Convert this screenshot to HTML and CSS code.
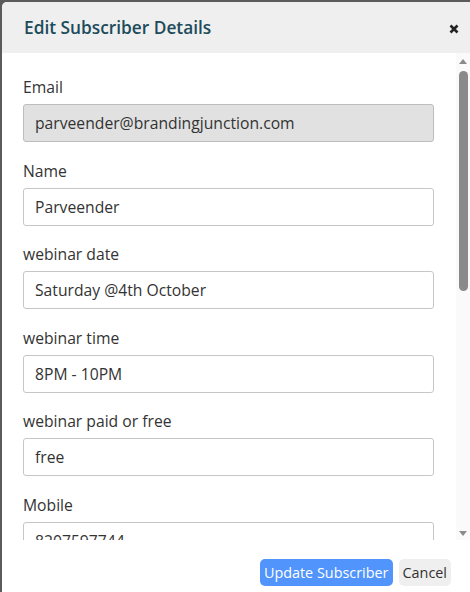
FILE: index.html
```html
<!DOCTYPE html>
<html>
<head>
<meta charset="utf-8">
<link rel="stylesheet" href="styles.css">
</head>
<body>
<div class="modal">
  <div class="modal-header">
    <h2 class="modal-title">Edit Subscriber Details</h2>
    <svg class="close" width="10" height="10" viewBox="0 0 10 10"><path d="M1.5 1.5 L8.5 8.5 M8.5 1.5 L1.5 8.5" stroke="#222" stroke-width="2.6" stroke-linecap="butt"/></svg>
  </div>
  <div class="modal-body">
    <div class="fields">
      <div class="field">
        <div class="label">Email</div>
        <div class="input disabled">parveender@brandingjunction.com</div>
      </div>
      <div class="field">
        <div class="label">Name</div>
        <div class="input">Parveender</div>
      </div>
      <div class="field">
        <div class="label">webinar date</div>
        <div class="input">Saturday @4th October</div>
      </div>
      <div class="field">
        <div class="label">webinar time</div>
        <div class="input">8PM - 10PM</div>
      </div>
      <div class="field">
        <div class="label">webinar paid or free</div>
        <div class="input">free</div>
      </div>
      <div class="field">
        <div class="label">Mobile</div>
        <div class="input">8207597744</div>
      </div>
    </div>
    <div class="scrollbar">
      <div class="arrow up"></div>
      <div class="track"><div class="thumb"></div></div>
      <div class="arrow down"></div>
    </div>
  </div>
  <div class="modal-footer">
    <button class="btn primary">Update Subscriber</button>
    <button class="btn secondary">Cancel</button>
  </div>
</div>
</body>
</html>
```
FILE: styles.css
```css
html, body {
  margin: 0;
  padding: 0;
  height: 100%;
  overflow: hidden;
}
body {
  background: #5b5b5b;
  font-family: "Open Sans", "Noto Sans", sans-serif;
  color: #333;
}
.modal {
  margin: 2px 0 0 2px;
  height: 590px;
  background: #fff;
  border-top-left-radius: 5px;
  display: flex;
  flex-direction: column;
  overflow: hidden;
}
.modal-header {
  height: 51px;
  flex: none;
  background: #efefef;
  display: flex;
  align-items: center;
  justify-content: space-between;
  padding: 0 11px 0 22px;
}
.modal-title {
  margin: 0;
  font-size: 17.3px;
  font-weight: 600;
  color: #1c4b5b;
  letter-spacing: 0;
}
.close {
  margin-top: 2px;
}
.modal-body {
  height: 487px;
  flex: none;
  display: flex;
  overflow: hidden;
}
.fields {
  flex: 1;
  padding: 24px 22px 0 21px;
  overflow: hidden;
}
.field {
  margin-bottom: 18.6px;
}
.label {
  font-size: 15.7px;
  line-height: 20px;
  margin-bottom: 7px;
  color: #333;
}
.input {
  height: 36px;
  border: 1px solid #c6c6c6;
  border-radius: 3px;
  padding: 0 11px;
  font-size: 15.7px;
  line-height: 36px;
  color: #333;
  background: #fff;
}
.input.disabled {
  background: #e1e1e1;
  border-color: #bdbdbd;
}
.scrollbar {
  width: 14px;
  flex: none;
  background: #fafafa;
  display: flex;
  flex-direction: column;
  align-items: center;
  padding: 6px 0 4px;
  box-sizing: border-box;
}
.arrow {
  width: 0;
  height: 0;
  border-left: 4px solid transparent;
  border-right: 4px solid transparent;
  flex: none;
}
.arrow.up {
  border-bottom: 5px solid #8a8a8a;
}
.arrow.down {
  border-top: 5px solid #8a8a8a;
}
.track {
  flex: 1;
  width: 100%;
  display: flex;
  justify-content: center;
  padding-top: 7px;
}
.thumb {
  width: 9px;
  height: 220px;
  background: #8a8a8a;
  border-radius: 5px;
}
.modal-footer {
  flex: 1;
  display: flex;
  justify-content: flex-end;
  align-items: flex-start;
  gap: 6px;
  padding: 19px 19px 0 0;
}
.btn {
  border: none;
  border-radius: 5px;
  height: 27px;
  font-family: "Open Sans", "Noto Sans", sans-serif;
  font-size: 14.4px;
  padding: 0 4px;
  cursor: pointer;
}
.btn.primary {
  background: #5094fc;
  color: #fff;
}
.btn.secondary {
  background: #efefef;
  color: #333;
}
```
